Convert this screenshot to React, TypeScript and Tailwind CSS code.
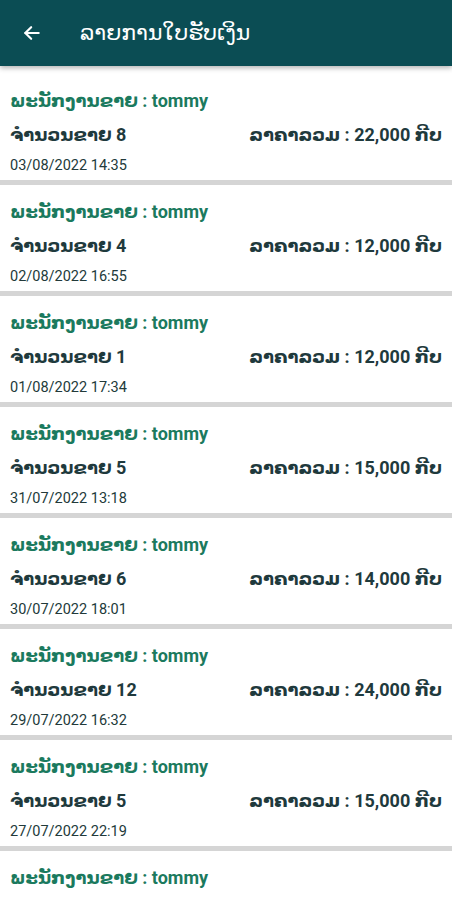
import React from "react";

const items = [
  { n: "8", total: "22,000", date: "03/08/2022 14:35" },
  { n: "4", total: "12,000", date: "02/08/2022 16:55" },
  { n: "1", total: "12,000", date: "01/08/2022 17:34" },
  { n: "5", total: "15,000", date: "31/07/2022 13:18" },
  { n: "6", total: "14,000", date: "30/07/2022 18:01" },
  { n: "12", total: "24,000", date: "29/07/2022 16:32" },
  { n: "5", total: "15,000", date: "27/07/2022 22:19" },
  { n: "3", total: "9,000", date: "26/07/2022 10:12" },
];

export default function App() {
  return (
    <div
      className="w-[452px] h-[900px] overflow-hidden bg-white"
      style={{ fontFamily: "Roboto, 'DejaVu Sans', 'Noto Sans', sans-serif" }}
    >
      <div className="relative z-10 h-[66px] bg-[#0b4d54] flex items-center shadow-[0_2px_5px_rgba(0,0,0,0.3)]">
        <svg
          className="ml-[22px]"
          width="20"
          height="20"
          viewBox="0 0 24 24"
          fill="none"
          stroke="white"
          strokeWidth="2.6"
          strokeLinecap="round"
          strokeLinejoin="round"
        >
          <path d="M20 12H4" />
          <path d="M11 5l-7 7 7 7" />
        </svg>
        <span className="ml-[38px] text-white text-[22px] leading-none">ລາຍການໃບຮັບເງິນ</span>
      </div>
      <div className="pt-[8px] flex flex-col">
        {items.map((it, i) => (
          <div
            key={i}
            className="h-[111px] shrink-0 px-[10px] pt-[16px] border-b-[5px] border-[#d5d5d5] flex flex-col"
          >
            <div className="text-[18px] leading-[22px] font-bold text-[#1b7a5e] whitespace-nowrap">
              ພະນັກງານຂາຍ : tommy
            </div>
            <div className="mt-[12px] flex justify-between text-[18px] leading-[22px] font-bold text-[#1f3a3d] whitespace-nowrap">
              <span>ຈຳນວນຂາຍ {it.n}</span>
              <span>ລາຄາລວມ : {it.total} ກີບ</span>
            </div>
            <div className="mt-[12px] text-[14.5px] leading-[16px] text-[#223a3a]">{it.date}</div>
          </div>
        ))}
      </div>
    </div>
  );
}
